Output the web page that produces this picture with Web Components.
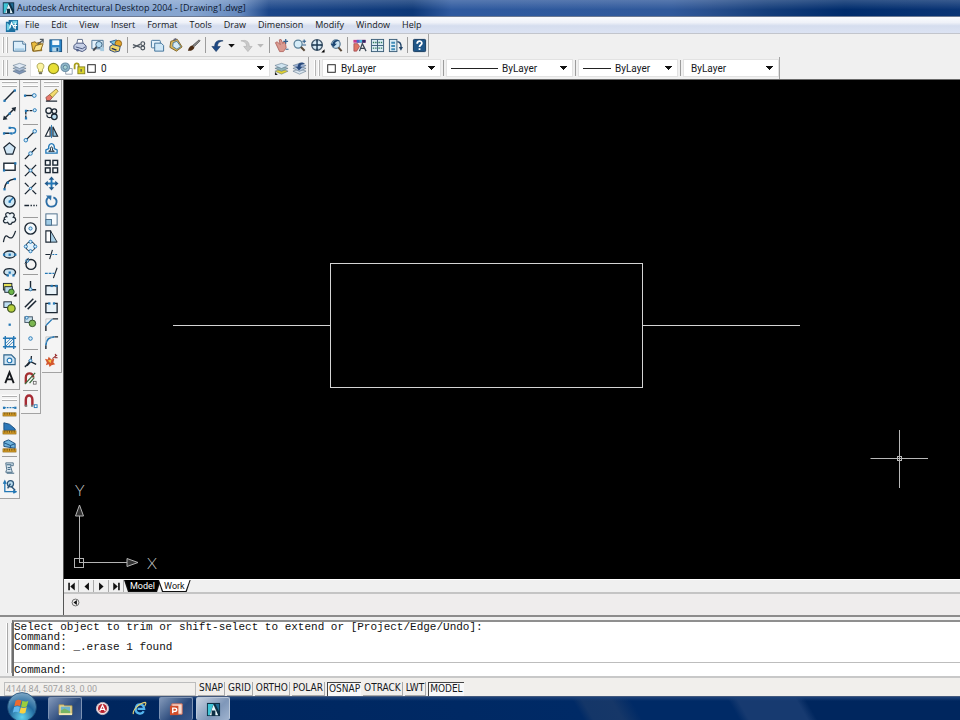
<!DOCTYPE html>
<html lang="en">
<head>
<meta charset="utf-8">
<title>Autodesk Architectural Desktop 2004 - [Drawing1.dwg]</title>
<style>
  html, body { margin: 0; height: 100%; }
  body {
    --edge: #a3a3a3;
    --ui: "Open Sans", "Noto Sans", sans-serif;
    --small: Roboto, "Liberation Sans", sans-serif;
    background: #f0f0f0; color: #16181c; font-family: var(--ui); font-size: 9px;
  }
</style>
</head>
<body>
<cad-app></cad-app>
<script>
const K = '#1b2733', B = '#2377b5', L = '#cfe5f4';
const node = (x, y, r = 1.7) => `<circle cx="${x}" cy="${y}" r="${r}" fill="#d8ecf8" stroke="${B}"/>`;
const dot = (x, y) => `<rect x="${x - 1}" y="${y - 1}" width="2.4" height="2.4" fill="${B}"/>`;
const ln = (d, c = K, w = 1.2, extra = '') => `<path d="${d}" fill="none" stroke="${c}" stroke-width="${w}" ${extra}/>`;
const sheets = (a, b, c) => `<path d="M8 8.5l7 2.3-7 3.2-7-3.2z" fill="${c}" stroke="#5b7287" stroke-width=".6"/><path d="M8 5.5l7 2.3-7 3.200-7-3.200z" fill="${b}" stroke="#5b7287" stroke-width=".6"/><path d="M8 2.500l7 2.300-7 3.200-7-3.200z" fill="${a}" stroke="#5b7287" stroke-width=".6"/>`;
const ruler = `<rect x="1" y="11.5" width="14" height="3.5" fill="#d39a25" stroke="#8a6414" stroke-width=".6"/>${ln('M3 11.5v2M5.5 11.5v2M8 11.5v2M10.5 11.5v2M13 11.5v2', '#5c430d', .8)}`;
const shapes = `<rect x="2" y="3" width="8" height="6" fill="#bfdff2" stroke="${K}"/><circle cx="10" cy="10" r="4" fill="#b6cf3c" stroke="#3e5420" stroke-width="1.3"/>`;

const ICONS = {
  app: `<rect x="1" y="1" width="14" height="14" fill="#0d2f45"/><path d="M2 2h6L4 14H2z" fill="#3fc4d6"/><path d="M8 3l5 11h-3V9H6v5H4z" fill="#e9f7fb"/><path d="M10 2h4v8z" fill="#1e6a93"/>`,
  doc: `<path d="M2 4h3v-2h10v11h-3v2H2z" fill="#1b6fa0"/><path d="M3 5l5 4-3 4H3zM9 3h5v3l-5 1z" fill="#73cfe6"/><path d="M6 11l2-6 3 6M10 8h4M12 5v7" fill="none" stroke="#fff" stroke-width="1.2"/>`,
  new: `<path d="M1.5 3.5h10l3 3v7.500h-13z" fill="#dceefa" stroke="#3f6d92"/><path d="M11.5 3.5v3h3" fill="#fff" stroke="#3f6d92"/><path d="M3 12h10" stroke="#a9cfe8" stroke-width="2"/>`,
  open: `<path d="M3 14L1.5 5l4-1 1 1.5 5-1 1 9z" fill="#e9bb3d" stroke="#87641b"/><path d="M3.5 14L6 8l8-2-2.5 7z" fill="#fbe489" stroke="#87641b"/><path d="M8 7l6-5M10.5 1.5H14V5" fill="none" stroke="#4f5960" stroke-width="1.3"/>`,
  save: `<rect x="2" y="2" width="12.5" height="12.5" fill="#2c86c8" stroke="#164f80"/><rect x="4.5" y="2.5" width="7.5" height="5" fill="#f4fafd"/><rect x="4.5" y="10" width="7.5" height="4.5" fill="#b7d8ea"/><rect x="9" y="10.5" width="2" height="3.5" fill="#164f80"/>`,
  print: `<path d="M5 7L6 1.5h5L12 7z" fill="#fff" stroke="#5c6b87"/><path d="M2 8l3-2.5h7l3 3v3.500l-4 2.500-9-3z" fill="#c5cfe6" stroke="#44527a"/><path d="M4 9.5l7 2 3-2" fill="none" stroke="#44527a"/><circle cx="6" cy="13" r="1.4" fill="#53638b"/>`,
  preview: `<path d="M2 2.5h12v9H2z" fill="#e4f1fa" stroke="#4b7293"/><circle cx="9.5" cy="7" r="3.3" fill="#b6dcf2" stroke="#3a617f"/><path d="M7 9.5l-3.5 4" stroke="#44484e" stroke-width="2"/><path d="M11 10h4v4h-4z" fill="#a5c9df"/>`,
  publish: `<path d="M2 4l7-2 3 4-3 3z" fill="#7ac4e0" stroke="#2b5d8f"/><circle cx="11" cy="6" r="3.5" fill="#e3a62b" stroke="#895d17"/><path d="M2 9l3-2 8 2-1 5-5 1-5-2z" fill="#f0d568" stroke="#2c4878"/><path d="M4 11l5 2" stroke="#1d2b55" stroke-width="1.3"/>`,
  cut: `${ln('M1 7l8 3M1 10.5l8-4', '#525a63', 1.5)}<circle cx="11.500" cy="6" r="2" fill="none" stroke="#4a535c" stroke-width="1.3"/><circle cx="11.5" cy="10.7" r="2" fill="none" stroke="#4a535c" stroke-width="1.3"/>`,
  copy: `<rect x="1.5" y="2.5" width="9.5" height="8" rx="1" fill="#e4f2fb" stroke="#3f7199"/><path d="M5 5.5h7l2.5 2.5v6H5z" fill="#cfe7f6" stroke="#3f7199"/>`,
  paste: `<path d="M3 3.5l7-2 5 8-6 4.5-7-4z" fill="#dcb75a" stroke="#7d6327"/><path d="M5.5 5l4-1.5 4 5.5-4 3-4.5-3z" fill="#d5ebf6" stroke="#477798"/><path d="M6 2l3-1" stroke="#667" stroke-width="2"/>`,
  match: `<path d="M14 2l1 1-6 6-2-1z" fill="#8c8c8c" stroke="#333" stroke-width=".7"/><path d="M2 13.5c1-4 3-5.500 5-5.500l2 2c-1 3-4 4-7 3.500z" fill="#4b2c14"/>`,
  undo: `<path d="M14 3C8 1.5 5 4 5 9H2l4.500 5.500L11 9H8c0-3 1-5 6-6z" fill="#1d4a86" stroke="#102e58" stroke-width=".6"/>`,
  redo: `<path d="M2 3c6-1.5 9 1 9 6h3l-4.500 5.500L5 9h3C8 6 7 4 2 3z" fill="#c9c9c9" stroke="#aaa" stroke-width=".6"/>`,
  tri: `<path d="M4.5 6.5h7L8 10z" fill="#111"/>`,
  trioff: `<path d="M4.5 6.5h7L8 10z" fill="#b9b9b9"/>`,
  pan: `<path d="M1.5 5l2-1 3 3-1-5 2-.5 2 4.500 1-2 1.500.5 1 6-3 4H6z" fill="#d99a90" stroke="#a8564f" stroke-width=".8"/>${ln('M12.5 1v5M10 3.5h5M12.5 12h3', '#2f5f8c', 1.3)}`,
  zoom: `<circle cx="6.5" cy="6.5" r="4.3" fill="#d5ecf8" stroke="#5b8099" stroke-width="1.3"/><path d="M9.5 9.5l4 4" stroke="#5a4a3a" stroke-width="2.2"/>${ln('M13 1.5v4M11 3.5h4M11 7.5h4', '#2f5f8c')}`,
  zoomwin: `<circle cx="7.5" cy="7.5" r="5.7" fill="#d9ebf6" stroke="#3f5468" stroke-width="1.4"/><path d="M9 3.500h-3l1.5-2zM9 11.500H6l1.500 2zM3.500 6v3L1.500 7.500zM11.500 6v3l2-1.500z" fill="#1b3750"/>${ln('M7.5 3v9M3 7.5h9', '#1b3750', 1.5)}<path d="M15.5 12v3.500H12z" fill="#000"/>`,
  zoomprev: `<circle cx="8.5" cy="6.5" r="4.5" fill="#cbe3f2" stroke="#5a7b96" stroke-width="1.3"/><path d="M11 10l3.5 4" stroke="#5a4a3a" stroke-width="2.2"/><path d="M13 3C9 1 5 3 5 6H2.5L6 9.500 9.500 6H7.500c0-1.500 2-3 5.500-3z" fill="#1c4673"/>`,
  props: `<path d="M1.5 2h13v3h-13z" fill="#c73a8b"/><path d="M5 2h3v3H5z" fill="#4069cc"/><path d="M8 2h3v3H8z" fill="#48b9dd"/><path d="M11 2h3.500v3H11z" fill="#2a2a66"/><path d="M2 6h4l2 3-3 5H2z" fill="#df7564" stroke="#943f4b" stroke-width=".7"/>${ln('M8 14l3-8 4 8M9 11h4', '#3a4652', 1.3)}`,
  dc: `<rect x="1.5" y="1.5" width="13" height="13" fill="#dcecf5" stroke="#3a5d77"/>${ln('M8 2v12M2 8h12', '#3a5d77', 1)}<path d="M3 4h1.500v1.500H3zM5.500 4H7v1.500H5.500zM3 10h1.500v1.500H3zM5.500 10H7v1.500H5.500zM9 4h1.500v1.500H9zM11.500 4H13v1.500h-1.500zM9 10h1.500v1.500H9zM11.500 10H13v1.500h-1.500z" fill="#2d7a58"/>`,
  tp: `<rect x="1.5" y="1.5" width="8" height="13" fill="#dcecf5" stroke="#3a5d77"/><path d="M3.5 4h4v2h-4zM3.5 7.500h4v2h-4zM3.5 11h4v2h-4z" fill="#438db8"/>${ln('M10 4c3 0 4 2 4 6', '#24476b', 1.5)}<path d="M11.5 9.500h4.500l-2.200 4z" fill="#24476b"/>`,
  help: `<rect x="1.5" y="1.5" width="13" height="13" rx="1" fill="#1f5688" stroke="#12385c"/>${ln('M5.5 6c0-3.500 5-3.500 5-.5 0 2-2.500 2-2.500 4M8 11v1.800', '#fff', 1.9)}`,
  layers: sheets('#dfe9f4', '#aebed4', '#7f94b5'),
  laymake: sheets('#cfe4f0', '#8fb1b8', '#e2d22f') + `<path d="M1 15V11.500l3 3.500z" fill="#222"/>`,
  layprev: sheets('#9db3d8', '#b3c6df', '#dbe6ef') + `<path d="M14 3C10 0 6 2 6 6H4l3.500 4L11 6H9c0-2 2-3 5-3z" fill="#28497c"/>`,
  bulb: `<path d="M8 1.5c-5 0-5 5-2.500 7.500V12h5V9C13 6.500 13 1.500 8 1.500z" fill="#fbf3a0" stroke="#9a9339"/><path d="M6 12.500h4v2.500H6z" fill="#70705c"/>`,
  sun: `<circle cx="8" cy="8" r="6.3" fill="#e8df35" stroke="#8b8a25" stroke-width="1.4"/>`,
  vp: `<path d="M7 8h8v7H7z" fill="#fff" stroke="#8593a2"/><circle cx="6.5" cy="6.5" r="5.3" fill="#8fb6c9" stroke="#6d91a8" stroke-width="1.3"/><circle cx="6.5" cy="6.5" r="2.5" fill="#a9d3d5" stroke="#557c93"/>`,
  lock: `<path d="M2 9V4c0-3 5-3 5 0v2" fill="none" stroke="#a79d1a" stroke-width="2.2"/><rect x="6" y="6" width="8.5" height="8.5" fill="#d8d22c" stroke="#7d7815"/><path d="M10 8.5v3.500" stroke="#555" stroke-width="1.5"/>`,
  box: `<rect x="2.5" y="2.5" width="11" height="11" fill="#fff" stroke="#222" stroke-width="1.4"/>`,

  line: ln('M2.5 13.5L13.5 2.5', K, 1.5) + dot(2.5, 13.5) + dot(13.5, 2.5),
  xline: ln('M3 13L13 3', K, 1.6) + `<path d="M1 15l1-5 4 4zM15 1l-1 5-4-4z" fill="${K}"/>` + dot(8, 8),
  pline: ln('M2 11h8M8 5h3.500c4 0 4 6 0 6', B, 1.5) + ln('M1.5 11h6', K) + dot(2, 11) + dot(8, 5) + dot(10, 11),
  polygon: `<path d="M8 2l6 5-2.500 7h-7L2 7z" fill="${L}" stroke="${K}" stroke-width="1.3"/>`,
  rect: `<rect x="2" y="4.5" width="12" height="7.5" fill="#fff" stroke="${K}" stroke-width="1.5"/>` + dot(2, 12) + dot(14, 4.5),
  arc: ln('M2.5 14C3 8 7 4 13.5 3', K, 1.4) + dot(2.5, 14) + dot(6, 7) + dot(13.5, 3),
  circle: `<circle cx="8" cy="8" r="6" fill="#cfe8f5" stroke="${K}" stroke-width="1.5"/>${ln('M8 8l4-4', B, 1.6)}` + dot(8, 8),
  cloud: `<path d="M5 6C2 3 6 0 8.500 3c3-2.500 6 1 3.500 3.500 4 1 3 6-1 5.500-1 3-4 3-5 0C2 14 0 10 3 9 1.500 8 3 6 5 6z" fill="#edf4f8" stroke="${K}" stroke-width="1.3"/>`,
  spline: ln('M1.5 14c2-10 4-6 6-5s4 2 7-7', K, 1.3),
  ellipse: `<ellipse cx="8" cy="8" rx="6" ry="3.8" fill="#c3e0f0" stroke="${K}" stroke-width="1.5"/>` + dot(8, 8) + dot(2, 8) + dot(14, 8),
  earc: `<path d="M6 12c-6-1-5-7 2-7s8 5 4 7" fill="#c9e2f0" stroke="${K}" stroke-width="1.4"/>` + dot(6, 12) + dot(12, 12) + dot(8, 9),
  insblock: `<rect x="1.5" y="1.5" width="9" height="7" fill="#e3df55" stroke="${K}"/><rect x="3" y="5" width="8" height="6" fill="#b9d9eb" stroke="${K}"/><circle cx="10" cy="10.5" r="3" fill="#6db548" stroke="#285026"/><path d="M15.500 12v3.500H12z"/>`,
  mkblock: shapes,
  point: dot(8, 8),
  hatch: ln('M3.5 1v14M12.5 1v14M1 3.5h14M1 12.5h14', B, 1.5) + ln('M4 9l5-5M4 12l8-8M7 12l5-5', B, .9),
  region: `<path d="M2 3h8l4 4v6.500H2z" fill="${L}" stroke="#2f648b" stroke-width="1.2"/><circle cx="8" cy="9" r="2.500" fill="#fff" stroke="${B}" stroke-width="1.2"/>`,
  text: ln('M3.5 14L8 2.5 12.5 14M5 10h6', '#15181c', 2),
  dist: ln('M2 6h12', B, 1.3, 'stroke-dasharray="2 1"') + dot(2, 6) + dot(14, 6) + ruler,
  area: `<path d="M2 10V3l6 1.5 6 5V11H2z" fill="#2b77b8" stroke="#194e7e"/>` + ruler,
  mass: `<path d="M2 9V4l5-2 7 4v5z" fill="#6fb3dc" stroke="#194e7e"/>${ln('M2 5l7 3v3M9 8l5-2', '#194e7e', 1)}` + ruler,
  list: `<path d="M4 2h8v3H9l2 7H4l1-3z" fill="#d8e6ef" stroke="#4f6f87"/>${ln('M5 4h5M6 7h3M6 9h3M5 13h8', '#345f7e', 1)}`,
  locate: ln('M3 3v10.500h11M1.500 5L3 2l1.500 3M12 12l3 1.500-3 1.500', B, 1.4) + `<circle cx="9" cy="5" r="3.3" fill="#b9dbee" stroke="#2d5679" stroke-width="1.3"/>${ln('M6 10l3-5M10 8l4 4', '#2d5679', 1.5)}`,

  track: ln('M2 8h9', K, 1.4) + dot(2, 8) + node(12, 8, 2),
  from: ln('M3 13V5h7', K, 1.4, 'stroke-dasharray="3 1"') + node(12.5, 4.5) + dot(3, 13) + dot(3, 5),
  endp: ln('M3 13L12 4', K, 1.3) + node(3, 13, 1.9) + node(12.5, 3.5, 1.9),
  mid: ln('M2 14L14 2', K, 1.5) + node(8, 8, 1.9),
  inter: ln('M2 2l12 12M14 2L2 14', K, 1.5) + node(8, 8, 1.5),
  appint: ln('M2 2l4 4M10 10l4 4M14 2L2 14', K, 1.5) + node(8, 8, 1.2),
  ext: ln('M1.5 8h5', K, 1.6) + ln('M8 8h7', K, 1.5, 'stroke-dasharray="1.5 1.5"'),
  cen: `<circle cx="8" cy="8" r="6" fill="#f4f9fc" stroke="${K}" stroke-width="1.5"/>` + node(8, 8),
  quad: `<circle cx="8" cy="8" r="4.8" fill="#e5f2fa" stroke="${K}" stroke-width="1.2"/>` + node(8, 3) + node(8, 13) + node(3, 8) + node(13, 8),
  tan: `<circle cx="8.500" cy="9" r="5.3" fill="none" stroke="${K}" stroke-width="1.5"/>` + node(4.5, 5) + ln('M2 8l4-6', K, 1),
  perp: ln('M8 2v8M2 11.500h12', K, 1.5) + node(8, 11, 1.6),
  para: ln('M2 12l9-9M5 14l9-9', K, 1.6),
  ins: `<rect x="2" y="3" width="8" height="6" fill="#c7dfeb" stroke="#415363"/><circle cx="10" cy="10" r="3.5" fill="#7bb651" stroke="#315128"/>` + node(4, 4, 1.5),
  nodep: node(8, 8, 1.9),
  near: ln('M2 13C6 12 9 8 9 2M6 7l8 4M2 14l7-8', K, 1.4) + node(8, 7, 1.5),
  none: `<path d="M3 13V7c0-6 8-6 8 0" fill="none" stroke="#a22f30" stroke-width="2.5"/>${ln('M2 14L13 2M7 13l5-6', '#3b6b3d', 1.3)}<rect x="11" y="11" width="3" height="3" fill="#fff" stroke="#555" stroke-width=".8"/>`,
  osnap: `<path d="M3 13V6c0-6 7-6 7 0v6" fill="none" stroke="#a52a33" stroke-width="2.6"/>${ln('M2 12.5h2.500M8.500 12.500H11', '#777', 2)}<rect x="12" y="11.5" width="3" height="3" fill="#fff" stroke="${B}"/>`,

  erase: `<path d="M2 10l4-3 3 3-3 3.500H3z" fill="#e7776b" stroke="#8b463f" stroke-width=".8"/><path d="M6 7l7-6 2 2.500L9 10z" fill="#f3dc70" stroke="#86702a" stroke-width=".8"/>${ln('M2 14h12', K, 1.3)}`,
  copyobj: `<circle cx="5" cy="5" r="3" fill="none" stroke="${K}" stroke-width="1.4"/><circle cx="11" cy="5.5" r="2.5" fill="none" stroke="${K}" stroke-width="1.4"/><circle cx="11" cy="11.5" r="3" fill="#b9dcef" stroke="${K}" stroke-width="1.4"/>${ln('M3 9c0 3 2 4 5 3', K, 1.2)}`,
  mirror: `<path d="M6.5 3v10H1.500z" fill="#fff" stroke="${K}" stroke-width="1.2"/><path d="M9.5 3v10h5z" fill="#8fc4e2" stroke="${K}" stroke-width="1.2"/>${ln('M8 1v14', B, 1)}`,
  offset: `<path d="M2 13V9.500l3-1.500c-1-7 7-7 6 0l3 1.500V13z" fill="#e6f2f9" stroke="${B}" stroke-width="1.4"/><path d="M5 11l2-1c-1-5 3-5 2 0l2 1z" fill="none" stroke="${K}"/>`,
  array: [[1.5, 1.5], [9.5, 1.5], [1.5, 9.5], [9.5, 9.5]].map(([x, y]) => `<rect x="${x}" y="${y}" width="5" height="5" fill="#f8fbfd" stroke="${K}" stroke-width="1.5"/>`).join(''),
  move: ln('M8 3v10M3 8h10', B, 2) + `<path d="M8 .5L11 4H5zM8 15.500L5 12h6zM.5 8L4 5v6zM15.500 8L12 11V5z" fill="#225b8c"/>`,
  rotate: ln('M5 3.500C1 6 2 13.500 8 13.500s7.500-8 2-10', '#2c6ea6', 2) + `<path d="M2 1.500h6L7.500 7z" fill="#2c6ea6"/>`,
  scale: `<rect x="2" y="2" width="12" height="12" fill="#f7fbfd" stroke="#4a6d8a"/><rect x="2" y="8" width="6" height="6" fill="#9fcbe5" stroke="#4a6d8a"/>`,
  stretch: `<path d="M2 2h5v12H2z" fill="#fff" stroke="${K}" stroke-width="1.2"/><path d="M7 2l7 12H7z" fill="#a9d0e7" stroke="${K}"/>`,
  trim: ln('M1.5 8h5M9 3L6 13', K, 1.2) + ln('M9 8h6', B, 1.3, 'stroke-dasharray="2 1"'),
  extend: ln('M14 3l-4 11', K, 1.2) + ln('M1 9h10', B, 1.3, 'stroke-dasharray="3 1"'),
  break1: `<rect x="2" y="4" width="12" height="9.5" fill="#e8f2f8" stroke="${K}" stroke-width="1.4"/>` + dot(8, 4) + dot(13, 4),
  break2: `<path d="M5.5 3.500H2v10h12v-10h-3.500" fill="#e8f2f8" stroke="${K}" stroke-width="1.4"/>` + dot(5.5, 3.5) + dot(10.5, 3.5),
  chamfer: ln('M2 15V9M9 2h6', K, 1.5) + ln('M2 9l7-7', B, 1.5) + ln('M2 8V2h7', '#c4c4c4', 1),
  fillet: ln('M2 15v-4M11 2h4', K, 1.5) + ln('M2 11c0-6 4-9 9-9', B, 1.8) + ln('M2 8V2h7', '#c4c4c4', 1),
  explode: `<path d="M1 6l3 1 1-3 3 3 3-1-1 4 2 2-4 1-2 2-1-3-3 1 1-3z" fill="#d4572e"/><path d="M4 8l4-1-1 4z" fill="#f5c648"/>${ln('M9 6l5-4M12 1l1 4M14.500 5h-3', '#9a3232', 1.2)}`,

  first: `<path d="M4 3.500h2v9H4zM12 3v10L6.500 8z" fill="#111"/>`,
  prev: `<path d="M11 3v10L5.500 8z" fill="#111"/>`,
  next: `<path d="M5 3v10l5.500-5z" fill="#111"/>`,
  last: `<path d="M12 3.500h-2v9h2zM4 3v10l5.500-5z" fill="#111"/>`,
  scroll: `<circle cx="8" cy="8" r="5" fill="none" stroke="#555" stroke-width="1.2"/><path d="M10 4.500v7L5 8z" fill="#111"/>`,
  explorer: `<path d="M1 3h5l1 1h8v9H1z" fill="#e9d68a" stroke="#a5904f" stroke-width=".8"/><path d="M3 5h10v7H3z" fill="#6db3cf"/><path d="M3 9l4-2 6 3v2H3z" fill="#77b564"/><path d="M1 12h14v2H1z" fill="#f5e9b4"/>`,
  reader: `<circle cx="8" cy="8" r="6.5" fill="#f1e5e6" stroke="#c8b9bf"/><circle cx="8" cy="8" r="4.8" fill="#b9232f"/>${ln('M5 11l3-6.500 3 6.500M6 9h4', '#fff', 1.3)}`,
  ie: `<path d="M12.5 11c-2 4-9 3-8.500-3s8.500-6 9 .5H6" fill="none" stroke="#55b5ee" stroke-width="2.4"/><path d="M1.500 14C0 10 8 2 14 1.500c1.500.5.5 2.500-.5 4" fill="none" stroke="#e5d273" stroke-width="1.2"/>`,
  ppt: `<path d="M3 2h11v11H3z" fill="#f7ddd2" stroke="#e0745a"/><path d="M1 4h9v10H1z" fill="#d14e2c"/><path d="M4 12V6.500h2c3 0 3 3.500 0 3.500H4" fill="none" stroke="#fff" stroke-width="1.5"/>`,
  orb: `<defs><radialGradient id="g" cx=".5" cy=".85" r=".9"><stop offset="0" stop-color="#62d2ed"/><stop offset=".5" stop-color="#23699f"/><stop offset="1" stop-color="#8bb1cc"/></radialGradient></defs><circle cx="8" cy="8" r="7.7" fill="url(#g)" stroke="#1b4770" stroke-width=".4"/><path d="M4.6 4.600c1.200-.7 2-.6 3.100-.1l-.7 3c-1.100-.5-2-.5-3.100.1z" fill="#ee6a2e"/><path d="M8.200 4.700c1.100.5 2 .5 3.200-.1l-.8 3c-1.100.6-2 .6-3.100.1z" fill="#9bce3d"/><path d="M3.800 8c1.200-.6 2-.6 3.100-.1l-.7 3c-1.100-.5-2-.5-3.100.1z" fill="#62b8ed"/><path d="M7.400 8.100c1.100.5 2 .5 3.100-.1l-.7 3c-1.200.7-2.100.6-3.200.1z" fill="#fbd140"/>`
};

function define(name, css, html) {
  const t = document.createElement('template');
  customElements.define(name, class extends HTMLElement {
    connectedCallback() {
      if (this.shadowRoot) return;
      const root = this.attachShadow({ mode: 'open' });
      t.innerHTML = `<style>*{box-sizing:border-box}button,select,input{font:inherit;color:inherit;margin:0;border-radius:0}${css}</style>${typeof html === 'function' ? html(this) : html}`;
      root.append(t.content.cloneNode(true));
    }
  });
}
const at = (el, n, d = '') => el.getAttribute(n) ?? d;

define('cad-icon', ':host{display:inline-flex;flex:none;width:var(--icon,15px);height:var(--icon,15px)}svg{width:100%;height:100%;display:block}',
  el => `<svg viewBox="0 0 16 16" aria-hidden="true">${ICONS[at(el, 'name')]}</svg>`);

define('cad-tool', `
  :host{display:flex;width:18px;min-height:0}
  :host([slim]){width:11px}
  button{flex:1;min-width:0;min-height:0;padding:0;border:0;background:none;display:flex;align-items:center;justify-content:center}`,
  el => `<button type="button" aria-label="${at(el, 'label', at(el, 'icon'))}"><cad-icon name="${at(el, 'icon')}"></cad-icon></button>`);

define('cad-sep', `
  :host{display:flex;align-items:center;justify-content:center;width:6px}
  :host::before{content:"";width:1px;height:16px;background:#9c9c9c}
  :host([tight]){width:5px}
  :host([row]){width:auto;height:5px;flex:none}
  :host([row])::before{width:15px;height:1px}`, '');

define('cad-bar', `
  :host{display:flex;align-items:stretch;height:23px;border-right:1px solid var(--edge);border-bottom:1px solid #d2d2d2}
  :host([low]){height:22px;border-bottom:0}
  .grip{width:10px;flex:none;display:flex;gap:2px;padding:3px 2px}
  i{width:2px;border:solid #b5b5b5;border-width:0 1px 0 0;background:#fff}`,
  '<div class="grip"><i></i><i></i></div><slot></slot>');

define('cad-palette', `
  :host{display:flex;flex-direction:column;height:var(--len);padding-bottom:3px;border-right:1px solid var(--edge);border-bottom:1px solid var(--edge);background:#f4f4f4}
  .grip{height:7px;flex:none;display:flex;flex-direction:column;gap:2px;padding:1px 2px}
  i{height:2px;flex:none;border-bottom:1px solid #b0b0b0;background:#fff}
  ::slotted(cad-tool){flex:1;width:auto}`,
  '<div class="grip"><i></i><i></i></div><slot></slot>');

define('cad-title', `
  :host{display:flex;align-items:center;gap:2px;height:17px;padding:0 2px;color:#0d1830;border-bottom:1px solid #6d7b94;
    background:linear-gradient(#ffffff30,#ffffff00 60%),linear-gradient(90deg,#8caad3 0,#86a5d0 20%,#6488bd 25%,#1c478a 28%,#0d3878 43%,#2f5a9f 47%,#30599b 70%,#284f8d 74%,#143d7a 80%,#002c6c 88%,#0b3575 100%)}
  h1{margin:0;font:500 9px/16px var(--ui);white-space:nowrap}
  cad-icon{width:13px;height:14px}`,
  '<cad-icon name="app"></cad-icon><h1><slot></slot></h1>');

define('cad-menu', `
  :host{display:flex;align-items:center;height:17px;padding-left:4px;border-bottom:1px solid #c2c5cc;background:linear-gradient(#fbfcfe,#eef1f8 35%,#d5ddee 55%,#dce3f3)}
  nav{display:flex}
  button{border:0;background:none;padding:0 6px;font-weight:500;line-height:16px}`,
  el => `<cad-icon name="doc"></cad-icon><nav>${at(el, 'items').split(',').map(t => `<button type="button">${t}</button>`).join('')}</nav>`);

define('cad-combo', `
  :host{display:flex;align-items:center;height:18px;background:#fff;margin:2px 0;border:1px solid #e2e2e2;padding-left:3px;font-family:var(--small)}
  select{flex:1;min-width:0;height:16px;padding:0 0 0 4px;border:0;appearance:none;font-size:10px;
    background:linear-gradient(#111,#111) right 6px top 7px/5px 1px no-repeat,linear-gradient(#111,#111) right 7px top 8px/3px 1px no-repeat,linear-gradient(#111,#111) right 5px top 6px/7px 1px no-repeat,linear-gradient(#111,#111) right 8px top 9px/1px 1px no-repeat}`,
  el => `<slot></slot><select aria-label="${at(el, 'label')}"><option>${at(el, 'value')}</option></select>`);

define('cad-drawing', ':host{display:block;background:#000;min-height:0}svg{display:block;width:100%;height:100%}text{font:300 16px Lato,sans-serif;fill:#c8c8c8}', `
  <svg role="img" aria-label="Drawing area" fill="none" stroke="#d4d4d4">
    <path d="M109 245.500H266M579 245.500H736"/><rect x="266.500" y="183.500" width="312" height="124"/>
    <g stroke="#b8b8b8"><path d="M806.500 378.500H864M835.500 350V408"/><rect x="833.500" y="376.500" width="4" height="4"/></g>
    <g stroke="#b4b4b4"><rect x="10.500" y="478.500" width="9" height="9"/><path d="M15.500 483V435.500M15.500 482.500H63"/><path d="M15.500 425l-4 11h8zM74 482.500l-11-4v8z" fill="#333"/></g>
    <text x="11" y="416" stroke="none">Y</text><text x="83" y="489" stroke="none">X</text>
  </svg>`);

define('cad-sheets', `
  :host{display:block;background:#efeded}
  .row{display:flex;height:13px;background:#f0f0f0;border-top:1px solid #fff}
  .nav{display:flex;--icon:13px}.nav cad-tool{width:15px;border-right:1px solid #aaa}
  .tab{border:0;padding:0 5px;font:9px/12px var(--small);background:#fff;color:#111;clip-path:polygon(0 0,100% 0,calc(100% - 4px) 100%,4px 100%)}
  .edge{display:flex;background:#111;padding:0 1px 1px;clip-path:polygon(0 0,100% 0,calc(100% - 4px) 100%,4px 100%)}
  .edge+.edge{margin-left:-3px}
  .on .tab{background:#000;color:#fff}
  .scroll{display:flex;align-items:flex-start;height:23px;padding-left:6px;border-top:2px solid #c4c4c4;--icon:11px}
  .scroll cad-tool{height:17px;width:11px}`, `
  <div class="row"><div class="nav"><cad-tool icon="first"></cad-tool><cad-tool icon="prev"></cad-tool><cad-tool icon="next"></cad-tool><cad-tool icon="last"></cad-tool></div>
  <span class="edge on"><button class="tab">Model</button></span><span class="edge"><button class="tab">Work</button></span></div>
  <div class="scroll"><cad-tool icon="scroll" label="Scroll left"></cad-tool></div>`);

define('cad-command', `
  :host{display:flex;height:63px;padding-top:3px;border-top:2px solid #8c8c8c;background:#f0f0f0;border-bottom:2px solid #c8c8c8;box-sizing:border-box}
  .grip{width:12px;display:flex;gap:2px;padding:3px 0 3px 6px}
  i{width:2px;border-right:1px solid #a8a8a8;background:#fff}
  .box{flex:1;min-width:0;display:flex;flex-direction:column;background:#fff;border-top:2px solid #8f8f8f;border-left:2px solid #6e6e6e;font:11px/10px "Liberation Mono",monospace;color:#111}
  pre{margin:0;font:inherit;flex:1;border-bottom:1px solid #bdbdbd}
  .line{display:flex;height:13px;align-items:center}
  input{flex:1;min-width:0;border:0;padding:0;outline:0;background:none;height:12px}`, `
  <div class="grip"><i></i><i></i></div><div class="box"><pre><slot></slot></pre><div class="line"><label for="c">Command:</label><input id="c" autocomplete="off"></div></div>`);

define('cad-status', `
  :host{display:flex;align-items:center;height:18px;padding:3px 4px 0;box-sizing:border-box;background:#f1efec;font:10px/12px "DejaVu Sans Condensed",Roboto,sans-serif}
  output{width:192px;height:14px;padding-left:1px;margin-right:2px;border:1px solid #bdbdbd;color:#a2a2a2;white-space:nowrap;font:9px/12px var(--small)}
  button{height:14px;margin-right:2px;padding:0 1px;border:solid #aaa;border-width:0 1px 1px 0;background:none;line-height:12px}
  button.on{border:solid #444;border-width:1px 0 0 1px;background:#f8f8f8}`,
  el => `<output>${at(el, 'coords')}</output>${at(el, 'modes').split(',').map(m => m[0] === '*' ? `<button type="button" class="on" aria-pressed="true">${m.slice(1)}</button>` : `<button type="button" aria-pressed="false">${m}</button>`).join('')}`);

define('cad-taskbar', `
  :host{position:relative;box-sizing:border-box;display:flex;gap:3px;height:24px;padding-left:48px;border-top:1px solid #43597d;
    background:linear-gradient(#1d4279,#00000000 4px),linear-gradient(60deg,#00255c 0,#002a66 60%,#143668 61%,#163768 64%,#002a66 66%,#002a66 76%,#173a70 77%,#173a70 83%,#00265e 84%)}
  button{width:34px;height:23px;padding:0;border:0;background:none;display:flex;align-items:center;justify-content:center}
  button.run{border:1px solid #7d93b4;border-bottom:0;border-radius:2px;background:linear-gradient(135deg,#8298b9,#29487a 60%,#36568a)}
  button.on{background:linear-gradient(135deg,#c6d0df,#7f97b9 60%,#9fb3cf);border-color:#b9c7d9}
  .start{position:absolute;left:7px;top:-5px;width:30px;height:30px}
  .start cad-icon{width:30px;height:30px}`, `
  <button class="start" aria-label="Start"><cad-icon name="orb"></cad-icon></button>
  <button class="run" aria-label="Explorer"><cad-icon name="explorer"></cad-icon></button>
  <button aria-label="Reader"><cad-icon name="reader"></cad-icon></button>
  <button aria-label="Internet Explorer"><cad-icon name="ie"></cad-icon></button>
  <button class="run" aria-label="PowerPoint"><cad-icon name="ppt"></cad-icon></button>
  <button class="run on" aria-label="Architectural Desktop"><cad-icon name="app"></cad-icon></button>`);

const tools = s => s.split(' ').map(n => n === '|' ? '<cad-sep></cad-sep>' : n === '-' ? '<cad-sep row></cad-sep>' : `<cad-tool icon="${n}"${n === 'tri' || n === 'trioff' ? ' slim' : ''}></cad-tool>`).join('');

define('cad-app', `
  :host{display:flex;flex-direction:column;min-height:100vh}
  .bars{display:flex}
  .props{margin-left:3px}
  .lay{width:240px;margin:2px;--icon:13px}
  .swatch{width:11px;height:11px}
  .rule{height:1px;background:#222;flex:none;margin-left:1px}
  .work{flex:1;display:grid;grid-template-columns:64px minmax(0,1fr);min-height:0;border-top:1px solid #6b6b6b}
  .side{display:flex;align-items:flex-start;gap:1px;border-right:1px solid #555}
  .col{display:flex;flex-direction:column;gap:4px;width:20px}
  .view{display:flex;flex-direction:column;min-width:0}
  cad-drawing{flex:1}`, `
  <cad-title>Autodesk Architectural Desktop 2004 - [Drawing1.dwg]</cad-title>
  <cad-menu items="File,Edit,View,Insert,Format,Tools,Draw,Dimension,Modify,Window,Help"></cad-menu>
  <div class="bars"><cad-bar>${tools('new open save | print preview publish | cut copy paste match | undo tri redo trioff | pan zoom zoomwin zoomprev | props dc tp | help')}</cad-bar></div>
  <div class="bars"><cad-bar low>${tools('layers')}
    <cad-combo class="lay" label="Layer" value="0"><cad-icon name="bulb"></cad-icon><cad-icon name="sun"></cad-icon><cad-icon name="vp"></cad-icon><cad-icon name="lock"></cad-icon><cad-icon name="box" class="swatch"></cad-icon></cad-combo>
    ${tools('laymake layprev')}</cad-bar>
    <cad-bar low class="props">
    <cad-combo label="Color" value="ByLayer" style="width:119px"><cad-icon name="box" class="swatch"></cad-icon></cad-combo><cad-sep tight></cad-sep>
    <cad-combo label="Linetype" value="ByLayer" style="width:127px"><span class="rule" style="width:47px"></span></cad-combo><cad-sep tight></cad-sep>
    <cad-combo label="Lineweight" value="ByLayer" style="width:100px"><span class="rule" style="width:28px"></span></cad-combo><cad-sep tight></cad-sep>
    <cad-combo label="Plot style" value="ByLayer" style="width:96px"></cad-combo></cad-bar></div>
  <div class="work">
    <div class="side">
      <div class="col"><cad-palette style="--len:310px">${tools('line xline pline polygon rect arc circle cloud spline ellipse earc insblock mkblock point hatch region text')}</cad-palette>
      <cad-palette style="--len:105px">${tools('dist area mass - list locate')}</cad-palette></div>
      <div class="col"><cad-palette style="--len:334px">${tools('track from - endp mid inter appint ext - cen quad tan - perp para ins nodep - near none - osnap')}</cad-palette></div>
      <div class="col"><cad-palette style="--len:293px">${tools('erase copyobj mirror offset array move rotate scale stretch trim extend break1 break2 chamfer fillet explode')}</cad-palette></div>
    </div>
    <div class="view"><cad-drawing></cad-drawing><cad-sheets></cad-sheets></div>
  </div>
  <cad-command>Select object to trim or shift-select to extend or [Project/Edge/Undo]:
Command:
Command: _.erase 1 found</cad-command>
  <cad-status coords="4144.84, 5074.83, 0.00" modes="SNAP,GRID,ORTHO,POLAR,*OSNAP,OTRACK,LWT,*MODEL"></cad-status>
  <cad-taskbar></cad-taskbar>`);
</script>
</body>
</html>
